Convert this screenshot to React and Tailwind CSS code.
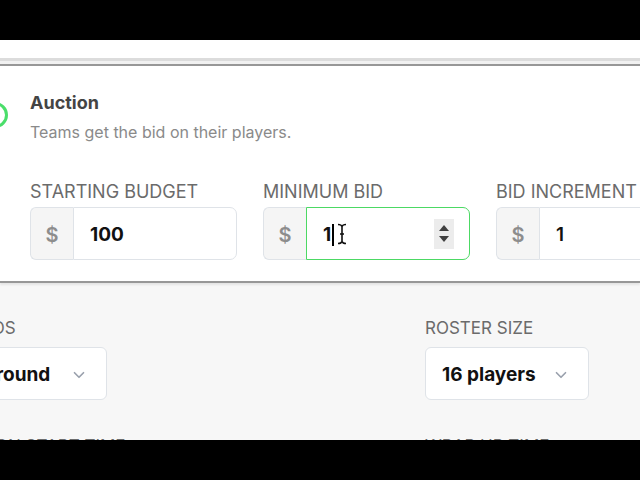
import { ChevronDown } from "lucide-react";

function Spinner() {
  return (
    <div className="flex h-[30px] w-[20px] flex-col items-center justify-center gap-[5px] bg-[#ececec]">
      <svg width="10" height="6" viewBox="0 0 10 6">
        <path d="M5 0 L10 6 L0 6 Z" fill="#3f3f3f" />
      </svg>
      <svg width="10" height="6" viewBox="0 0 10 6">
        <path d="M0 0 L10 0 L5 6 Z" fill="#3f3f3f" />
      </svg>
    </div>
  );
}

function IBeam() {
  return (
    <svg width="10" height="22" viewBox="0 0 10 22" className="ml-[3px]">
      <path
        d="M1 1.5 C3 1.5 4.5 2 5 3.5 C5.5 2 7 1.5 9 1.5 M5 3.5 L5 18.5 M1 20.5 C3 20.5 4.5 20 5 18.5 C5.5 20 7 20.5 9 20.5 M3 11 L7 11"
        fill="none"
        stroke="#111"
        strokeWidth="1.6"
      />
    </svg>
  );
}

function MoneyField({ label, value, focused, weight = "font-bold" }) {
  return (
    <div className="flex w-[207px] shrink-0 flex-col gap-[3px]">
      <p className="h-[24px] whitespace-nowrap text-[18px] leading-[24px] text-[#6b6b6b]">{label}</p>
      <div className="flex h-[53px]">
        <div className="flex w-[43px] items-center justify-center rounded-l-[6px] border border-r-0 border-[#dfe3e8] bg-[#f5f5f5] pt-[2px] text-[20px] font-semibold text-[#8d8d8d]">
          $
        </div>
        <div
          className={`flex flex-1 items-center rounded-r-[7px] border pl-[16px] pr-[15px] ${
            focused ? "border-[#4cd964]" : "border-[#dfe3e8]"
          } bg-white`}
        >
          <span className={`pt-[3px] text-[19px] ${weight} text-[#111]`}>{value}</span>
          {focused && (
            <>
              <span className="ml-[1px] mt-[2px] h-[22px] w-[2px] bg-black" />
              <IBeam />
              <div className="ml-auto">
                <Spinner />
              </div>
            </>
          )}
        </div>
      </div>
    </div>
  );
}

function SelectField({ label, value }) {
  return (
    <div className="flex w-[164px] flex-col gap-[7px]">
      <p className="h-[24px] whitespace-nowrap text-[17px] leading-[24px] text-[#6b6b6b]">{label}</p>
      <div className="flex h-[53px] items-center justify-between rounded-[6px] border border-[#dfe3e8] bg-white pl-[16px] pr-[18px]">
        <span className="pt-[3px] whitespace-nowrap text-[19px] font-bold text-[#111]">{value}</span>
        <ChevronDown size={18} strokeWidth={2.25} className="mt-[2px] text-[#9aa1ad]" />
      </div>
    </div>
  );
}

export default function App() {
  return (
    <div className="h-[480px] w-[640px] overflow-hidden bg-black font-['Inter',sans-serif]">
      <div className="mt-[40px] flex h-[400px] flex-col overflow-hidden bg-[#f7f7f7]">
        <div className="h-[18px] shrink-0 bg-white" />
        <div className="h-[3px] shrink-0 bg-[#dcdcdc]" />
        <div className="h-[3px] shrink-0 bg-[#f1f1f1]" />
        <section className="shrink-0 border-y-2 border-[#979797] bg-white pb-[21px] pt-[25px] shadow-[0_2px_2px_rgba(0,0,0,0.08)]">
          <div className="flex items-start gap-[22px] pl-[30px]">
            <div className="-ml-[48px] mt-[11px] h-[26px] w-[26px] shrink-0 rounded-full border-[3px] border-[#4ade6a]" />
            <div>
              <h2 className="text-[18px] font-bold leading-[24px] text-[#444]">Auction</h2>
              <p className="mt-[5px] text-[16px] leading-[24px] text-[#8a8a8a]">
                Teams get the bid on their players.
              </p>
            </div>
          </div>
          <div className="mt-[36px] flex gap-[26px] pl-[30px]">
            <MoneyField label="STARTING BUDGET" value="100" />
            <MoneyField label="MINIMUM BID" value="1" focused />
            <MoneyField label="BID INCREMENT" value="1" weight="font-semibold" />
          </div>
        </section>
        <div className="mt-[33px] grid grid-cols-[164px_164px] gap-x-[318px] gap-y-[34px] -ml-[57px]">
          <SelectField label="ROUNDS" value="Per round" />
          <SelectField label="ROSTER SIZE" value="16 players" />
          <p className="whitespace-nowrap text-[17px] leading-[24px] text-[#6b6b6b]">AUCTION START TIME</p>
          <p className="whitespace-nowrap text-[17px] leading-[24px] text-[#6b6b6b]">WRAP UP TIME</p>
        </div>
      </div>
    </div>
  );
}
